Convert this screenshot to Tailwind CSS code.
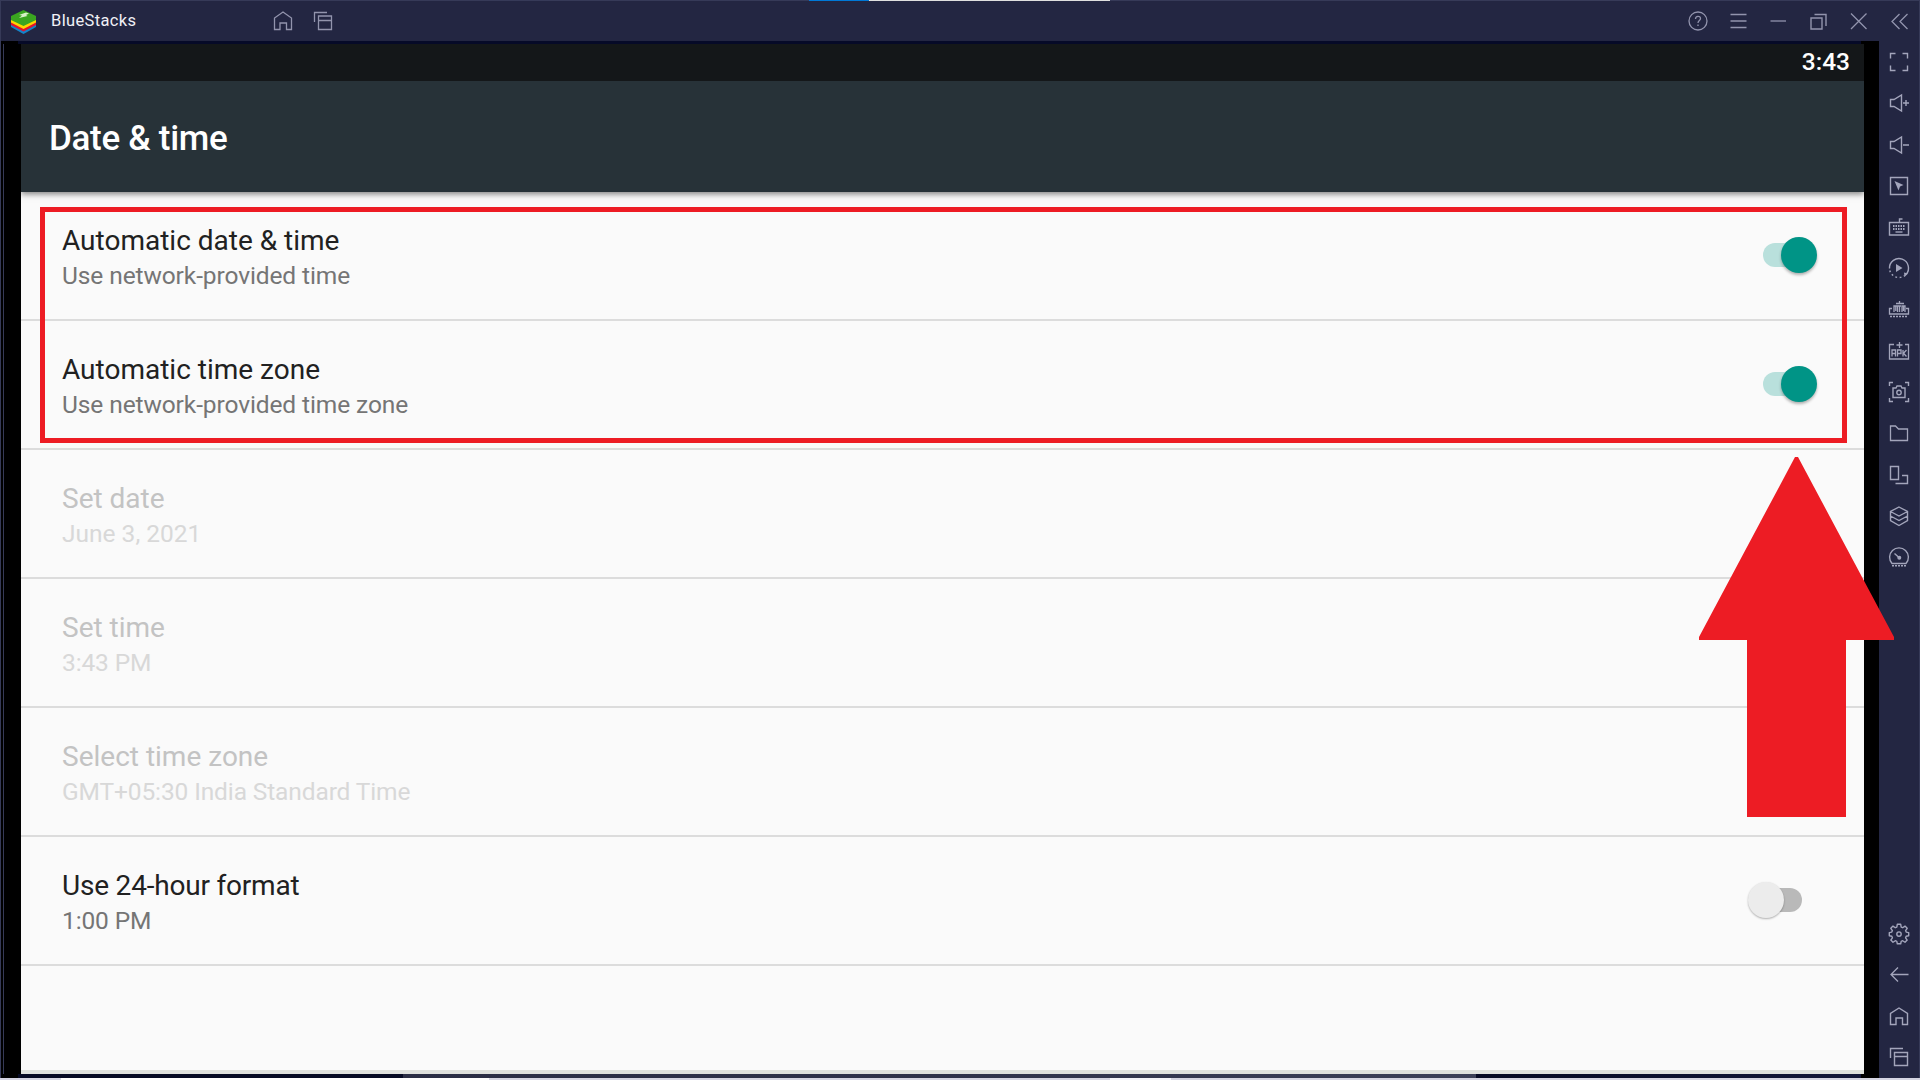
<!DOCTYPE html>
<html lang="en">
<head>
  <meta charset="UTF-8" />
  <meta name="viewport" content="width=device-width, initial-scale=1.0"/>
  <title>BlueStacks</title>
  <script src="https://cdn.jsdelivr.net/npm/@tailwindcss/browser@4"></script>
</head>
<body class="relative w-[1920px] h-[1080px] overflow-hidden bg-black font-['Roboto',sans-serif] flex flex-col">
  <!-- Title bar -->
  <header class="h-[41px] shrink-0 bg-[#232642] border-t border-l border-r border-[#363a58] flex items-center text-[#9294ad]">
    <svg class="ml-[10px] mt-[2px]" width="26" height="24" viewBox="0 0 26 24">
      <path d="M0 12v5l12.500 7 12.500-7v-5z" fill="#1583c8"/>
      <path d="M0 11v4l12.500 6.500 12.500-6.500V11z" fill="#e3122d"/>
      <path d="M0 9v3.500l12.500 6.500 12.500-6.500V9z" fill="#ffd500"/>
      <path d="M12.500 0L25 6v4l-12.500 6L0 10V6z" fill="#3aa520"/>
      <path d="M8 5l7-2.500 3 1-3 1.500 1.500 1L8 8l3-2.500z" fill="#d8f0c8"/>
    </svg>
    <span class="ml-[14px] w-[85px] text-[16.500px] leading-5 tracking-[0.350px] text-[#f0f0f6]">BlueStacks</span>
    <svg class="ml-[135px]" width="24" height="24" viewBox="0 0 24 24" fill="none" stroke="currentColor" stroke-width="1.300"><path d="M3.500 20.500V9L12 3l8.500 6v11.500h-5V14h-6.500v6.500z"/></svg>
    <svg class="ml-4" width="24" height="24" viewBox="0 0 24 24" fill="none" stroke="currentColor" stroke-width="1.300"><path d="M3.500 13V3.500H16M7.500 7h13v13.500h-13zM7.500 11.500h13"/></svg>
    <div class="ml-auto mr-[7px] mb-px flex items-center gap-4">
      <svg width="24" height="24" viewBox="0 0 24 24" fill="none" stroke="currentColor" stroke-width="1.300"><circle cx="12" cy="12" r="9"/><path d="M9.500 10c0-3.500 5-3.500 5-.5 0 2-2.500 2-2.500 4.500M12 15.500v1.500"/></svg>
      <svg width="24" height="24" viewBox="0 0 24 24" fill="none" stroke="currentColor" stroke-width="1.300"><path d="M4.500 5.500h16M4.500 12h16M4.500 18.500h16"/></svg>
      <svg width="24" height="24" viewBox="0 0 24 24" fill="none" stroke="currentColor" stroke-width="1.300"><path d="M4.500 12h15.500"/></svg>
      <svg width="24" height="24" viewBox="0 0 24 24" fill="none" stroke="currentColor" stroke-width="1.400"><path d="M5 9h11v11H5zM8.500 5.500h11.500V17"/></svg>
      <svg width="24" height="24" viewBox="0 0 24 24" fill="none" stroke="currentColor" stroke-width="1.300"><path d="M5 4.500l15.500 15.500M20.500 4.500L5 20"/></svg>
      <svg class="ml-[2px]" width="24" height="24" viewBox="0 0 24 24" fill="none" stroke="currentColor" stroke-width="1.300"><path d="M11.500 5L4 12.500l7.500 7.500M19.500 5L12 12.500l7.500 7.500"/></svg>
    </div>
  </header>

  <div class="flex h-[1037px] shrink-0">
    <!-- Left window frame -->
    <div class="w-[18px] border-l border-[#363a58]"><div class="ml-[2px] mt-[3px] h-[1030px] w-px bg-[#363a58]"></div></div>

    <!-- Android screen -->
    <div class="w-[1861px] h-full">
      <div class="h-[3px] w-[1843px] bg-[#060a28]"></div>
      <div class="ml-[3px] w-[1843px] h-[1030px] bg-[#fafafa] flex flex-col overflow-hidden">
        <div class="relative z-10 h-[37px] shrink-0 bg-[#141719] flex items-center justify-end pb-[2px] pr-[14px] text-[24.500px] leading-7 font-medium text-white">3:43</div>
        <div class="h-[111px] shrink-0 bg-[#273238] flex items-center pl-7 pt-[5px] text-[35px] tracking-[-0.300px] font-medium text-white shadow-[0_2px_6px_rgba(0,0,0,0.5)]">Date &amp; time</div>

        <div class="h-[129px] shrink-0 border-b-2 border-[#dcdcdc] flex items-center justify-between pl-[41px] pr-[47px]">
          <div class="pt-[2px]">
            <p class="text-[28px] leading-[33px] text-[#212121]">Automatic date &amp; time</p>
            <p class="mt-1 text-[24.500px] leading-[29px] tracking-[-0.100px] text-[#757575]">Use network-provided time</p>
          </div>
          <div class="relative w-[54px] h-9 mb-px flex items-center">
            <div class="w-12 h-6 rounded-full bg-[#b9e0dc]"></div>
            <div class="absolute right-0 top-0 size-9 rounded-full bg-[#009486] shadow-[0_2px_3px_rgba(0,0,0,0.3)]"></div>
          </div>
        </div>

        <div class="h-[129px] shrink-0 border-b-2 border-[#dcdcdc] flex items-center justify-between pl-[41px] pr-[47px]">
          <div class="pt-[2px]">
            <p class="text-[28px] leading-[33px] text-[#212121]">Automatic time zone</p>
            <p class="mt-1 text-[24.500px] leading-[29px] tracking-[-0.100px] text-[#757575]">Use network-provided time zone</p>
          </div>
          <div class="relative w-[54px] h-9 mb-px flex items-center">
            <div class="w-12 h-6 rounded-full bg-[#b9e0dc]"></div>
            <div class="absolute right-0 top-0 size-9 rounded-full bg-[#009486] shadow-[0_2px_3px_rgba(0,0,0,0.3)]"></div>
          </div>
        </div>

        <div class="h-[129px] shrink-0 border-b-2 border-[#dcdcdc] flex items-center pl-[41px]">
          <div class="pt-[2px]">
            <p class="text-[28px] leading-[33px] text-[#c3c3c3]">Set date</p>
            <p class="mt-1 text-[24.500px] leading-[29px] text-[#d8d8d8]">June 3, 2021</p>
          </div>
        </div>

        <div class="h-[129px] shrink-0 border-b-2 border-[#dcdcdc] flex items-center pl-[41px]">
          <div class="pt-[2px]">
            <p class="text-[28px] leading-[33px] text-[#c3c3c3]">Set time</p>
            <p class="mt-1 text-[24.500px] leading-[29px] tracking-[-0.120px] text-[#d8d8d8]">3:43 PM</p>
          </div>
        </div>

        <div class="h-[129px] shrink-0 border-b-2 border-[#dcdcdc] flex items-center pl-[41px]">
          <div class="pt-[2px]">
            <p class="text-[28px] leading-[33px] text-[#c3c3c3]">Select time zone</p>
            <p class="mt-1 text-[24.500px] leading-[29px] tracking-[-0.120px] text-[#d8d8d8]">GMT+05:30 India Standard Time</p>
          </div>
        </div>

        <div class="h-[129px] shrink-0 border-b-2 border-[#dcdcdc] flex items-center justify-between pl-[41px] pr-[62px]">
          <div class="pt-[2px]">
            <p class="text-[28px] leading-[33px] tracking-[-0.200px] text-[#212121]">Use 24-hour format</p>
            <p class="mt-1 text-[24.500px] leading-[29px] tracking-[-0.120px] text-[#757575]">1:00 PM</p>
          </div>
          <div class="relative w-[54px] h-9 mb-px flex items-center justify-end">
            <div class="w-12 h-6 rounded-full bg-[#b9b9b9]"></div>
            <div class="absolute left-0 top-0 size-9 rounded-full bg-[#ececec] shadow-[0_1px_2px_rgba(0,0,0,0.3)]"></div>
          </div>
        </div>
        <div class="mt-auto h-1 bg-[#dfe1dd]"></div>
      </div>
      <!-- Wallpaper showing under the screen -->
      <div class="flex h-1 w-[1843px]">
        <div class="w-[385px] bg-[#060a24]"></div>
        <div class="w-[1073px] bg-linear-to-r from-[#2b2e45] via-[#2f324a] to-[#3c4058]"></div>
        <div class="flex-1 bg-linear-to-r from-[#060a24] to-[#14183a]"></div>
      </div>
    </div>

    <!-- Side toolbar -->
    <aside class="w-[41px] bg-[#232642] border-r border-[#363a58] flex flex-col items-center justify-between text-[#a3a5bb]">
      <div class="flex flex-col pt-[0.500px]">
        <div class="h-[41.250px] flex items-center"><svg width="24" height="24" viewBox="0 0 24 24" fill="none" stroke="currentColor" stroke-width="1.400"><path d="M3.500 8.500v-5h5M15.500 3.500h5v5M20.500 15.500v5h-5M8.500 20.500h-5v-5"/></svg></div>
        <div class="h-[41.250px] flex items-center"><svg width="24" height="24" viewBox="0 0 24 24" fill="none" stroke="currentColor" stroke-width="1.400"><path d="M3.500 8.500H7l7.500-4.500v16L7 15.500H3.500zM16 12h6M19 9v6"/></svg></div>
        <div class="h-[41.250px] flex items-center"><svg width="24" height="24" viewBox="0 0 24 24" fill="none" stroke="currentColor" stroke-width="1.400"><path d="M3.500 8.500H7l7.500-4.500v16L7 15.500H3.500zM16 12h6"/></svg></div>
        <div class="h-[41.250px] flex items-center"><svg width="24" height="24" viewBox="0 0 24 24" fill="none" stroke="currentColor" stroke-width="1.400"><path d="M3.500 3.500h17v17h-17z"/><path d="M7.500 7l9 4-3.500 1.500-1.500 4z" fill="currentColor" stroke="none"/></svg></div>
        <div class="h-[41.250px] flex items-center"><svg width="24" height="24" viewBox="0 0 24 24" fill="none" stroke="currentColor" stroke-width="1.400"><path d="M2.500 7.500h19v12.500h-19zM12.500 7V4h3"/><path d="M6 11h12M6 14h12" stroke-width="1.800" stroke-dasharray="1.500 1"/><path d="M8.500 17h7"/></svg></div>
        <div class="h-[41.250px] flex items-center"><svg width="24" height="24" viewBox="0 0 24 24" fill="none" stroke="currentColor" stroke-width="1.400"><path d="M2.500 12.500a9.500 9.500 0 1 1 16.500 6"/><path d="M2.800 14.500a9.500 9.500 0 0 0 15 5" stroke-dasharray="1.800 2.500"/><path d="M9 8v8l6.500-4zM17 16.500l4 1-3.500 3.500z" fill="currentColor" stroke="none"/></svg></div>
        <div class="h-[41.250px] flex items-center"><svg width="24" height="24" viewBox="0 0 24 24" fill="none" stroke="currentColor" stroke-width="1.300"><path d="M5 10.500H2.500V16h19v-5.500H19M9 5.500h8M12.500 3v3"/><path d="M7 14V8h3.500v6M12.500 8v6M11 8h3M15 14V8h3v6M8.800 8v5M16.500 8v5"/><path d="M3 18.500h18" stroke-dasharray="2 1"/></svg></div>
        <div class="h-[41.250px] flex items-center"><svg width="24" height="24" viewBox="0 0 24 24" fill="none" stroke="currentColor" stroke-width="1.300"><path d="M7 5.500H2.500v14.500h19V5.500H18M12.500 3v6M9.500 6h6"/><path d="M5 17.500v-6.500h3.500v6.500M5 14.500h3.500M10.500 17.500v-6.500H14v3.500h-3.500M16 11v6.500M19.500 11L16.500 14.200l3 3.300"/></svg></div>
        <div class="h-[41.250px] flex items-center"><svg width="24" height="24" viewBox="0 0 24 24" fill="none" stroke="currentColor" stroke-width="1.400"><path d="M2.500 6V2.500H6M18 2.500h3.500V6M21.500 18v3.500H18M6 21.500H2.500V18M6 8h3l1-2h4l1 2h3v9.500H6z"/><circle cx="12" cy="12.500" r="2.200"/></svg></div>
        <div class="h-[41.250px] flex items-center"><svg width="24" height="24" viewBox="0 0 24 24" fill="none" stroke="currentColor" stroke-width="1.300"><path d="M3.500 5H8.500l3 3h9v11.500h-17z"/></svg></div>
        <div class="h-[41.250px] flex items-center"><svg width="24" height="24" viewBox="0 0 24 24" fill="none" stroke="currentColor" stroke-width="1.400"><path d="M3.500 3.500h8v13h-8zM15 12.500h5.500v8H8.500"/></svg></div>
        <div class="h-[41.250px] flex items-center"><svg width="24" height="24" viewBox="0 0 24 24" fill="none" stroke="currentColor" stroke-width="1.400"><path d="M12 3l8.500 4.500v9L12 21.500l-8.500-5v-9zM3.500 7.500L12 12l8.500-4.500M3.500 12l8.500 4.500 8.500-4.500"/></svg></div>
        <div class="h-[41.250px] flex items-center"><svg width="24" height="24" viewBox="0 0 24 24" fill="none" stroke="currentColor" stroke-width="1.400"><path d="M5 18.500a9.400 9.400 0 1 1 14 0zM7.500 8.500l4.500 4"/><circle cx="12.300" cy="12.700" r="1.300" fill="currentColor"/><path d="M5 20.800h14" stroke-dasharray="2 1"/></svg></div>
      </div>
      <div class="flex flex-col">
        <div class="h-[41.250px] flex items-center"><svg width="24" height="24" viewBox="0 0 24 24" fill="none" stroke="currentColor" stroke-width="1.400" stroke-linejoin="round"><path d="M10.300 2.300h3.400l.5 2.800 1.500.6 2.300-1.600 2.200 2.200-1.600 2.300.6 1.500 2.500.5v3.200l-2.500.5-.6 1.500 1.600 2.300-2.200 2.200-2.300-1.600-1.500.6-.5 2.500h-3.400l-.5-2.500-1.500-.6L6 20.300l-2.200-2.200L5.400 15.800l-.6-1.500-2.500-.5v-3.200l2.500-.5.6-1.500-1.600-2.300L6 4.100l2.300 1.600 1.500-.6z"/><circle cx="12" cy="12.100" r="2.200"/></svg></div>
        <div class="h-[41.250px] flex items-center"><svg width="24" height="24" viewBox="0 0 24 24" fill="none" stroke="currentColor" stroke-width="1.300"><path d="M21.500 11.500H4M11 4.500l-7 7 7 7"/></svg></div>
        <div class="h-[41.250px] flex items-center"><svg width="24" height="24" viewBox="0 0 24 24" fill="none" stroke="currentColor" stroke-width="1.400"><path d="M3.500 20.500V9.500L12 4l8.500 5.500v11h-5V14h-6.500v6.500z"/></svg></div>
        <div class="h-[41.250px] flex items-center"><svg width="24" height="24" viewBox="0 0 24 24" fill="none" stroke="currentColor" stroke-width="1.400"><path d="M3.500 13V3.500H16M7.500 7.500h13v13h-13zM7.500 11.500h13"/></svg></div>
      </div>
    </aside>
  </div>

  <!-- Windows peeking out below -->
  <div class="h-[2px] shrink-0 bg-[#d5d5e2] flex">
    <div class="ml-[61px] w-[428px] bg-white"></div>
    <div class="ml-[621px] w-[61px] bg-[#f5f5fa]"></div>
  </div>

  <!-- Tab edge over the title bar -->
  <div class="absolute top-0 left-[809px] flex h-px"><div class="w-[60px] bg-[#0078d7]"></div><div class="w-[241px] bg-[#e0e0e0]"></div></div>

  <!-- Highlight frame and arrow -->
  <div class="absolute left-[40px] top-[207px] w-[1807px] h-[236px] border-5 border-[#ed1c24]"></div>
  <svg class="absolute left-[1699px] top-[457px]" width="196" height="360" viewBox="0 0 196 360"><path d="M96 0h3l96 180v3h-48v177H48V183H0v-3z" fill="#ed1c24"/></svg>
</body>
</html>
